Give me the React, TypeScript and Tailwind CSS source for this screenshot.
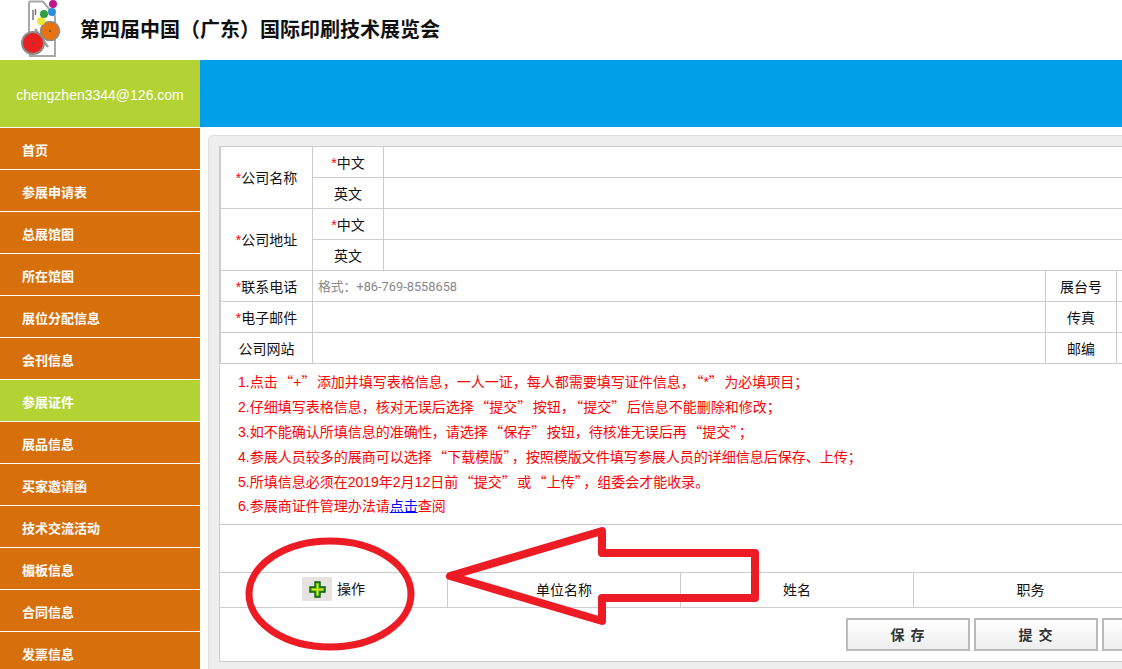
const MENU = [
  "首页",
  "参展申请表",
  "总展馆图",
  "所在馆图",
  "展位分配信息",
  "会刊信息",
  "参展证件",
  "展品信息",
  "买家邀请函",
  "技术交流活动",
  "楣板信息",
  "合同信息",
  "发票信息",
];

const NOTES = [
  "1.点击“+”添加并填写表格信息，一人一证，每人都需要填写证件信息，“*”为必填项目；",
  "2.仔细填写表格信息，核对无误后选择“提交”按钮，“提交”后信息不能删除和修改；",
  "3.如不能确认所填信息的准确性，请选择“保存”按钮，待核准无误后再“提交”；",
  "4.参展人员较多的展商可以选择“下载模版”，按照模版文件填写参展人员的详细信息后保存、上传；",
  "5.所填信息必须在2019年2月12日前“提交”或“上传”，组委会才能收录。",
];

const FONT = "font-['Liberation_Sans','Noto_Sans_CJK_SC',sans-serif]";

function Logo() {
  return (
    <svg width="80" height="60" viewBox="0 0 80 60" className="shrink-0">
      <path d="M29 1.5 H43 L55 16 V56 H30 V52 M29 1.5 V33" fill="none" stroke="#a8a8a8" strokeWidth="2" />
      <path d="M33 10 V20 M35.5 9 V15" stroke="#777" strokeWidth="1.5" />
      <line x1="35" y1="29" x2="48" y2="47" stroke="#a0a0a0" strokeWidth="2.5" />
      <circle cx="33" cy="43" r="11" fill="#e8201f" stroke="#8c8c8c" strokeWidth="2" />
      <circle cx="50" cy="31" r="9.5" fill="#e8720f" stroke="#8c8c8c" strokeWidth="1.6" />
      <circle cx="33" cy="43" r="1" fill="#555" />
      <circle cx="50" cy="31" r="1" fill="#555" />
      <circle cx="41" cy="21" r="4" fill="#f1e632" />
      <circle cx="44" cy="14" r="4" fill="#2f9e3f" />
      <circle cx="52" cy="12" r="4" fill="#2d8fd5" />
      <circle cx="53" cy="4" r="4" fill="#b9198c" />
    </svg>
  );
}

function Star() {
  return <span className="text-[#f00]">*</span>;
}

function Label({ required, children }: { required?: boolean; children: string }) {
  return (
    <td className="border border-[#ccc] pt-[3px] text-center text-[14px] text-[#111]">
      {required && <Star />}
      {children}
    </td>
  );
}

function Blank() {
  return <td className="border border-[#ccc]" />;
}

// curly quotes sit wider in the reference than in the fallback font
function Note({ text }: { text: string }) {
  return (
    <p className="h-[25px]">
      {text.split(/([“”])/).map((part, i) => {
        if (part === "“") {
          return (
            <span key={i} className="pl-[1.5px] font-['Noto_Sans_CJK_SC',sans-serif]">
              {part}
            </span>
          );
        }
        if (part === "”") {
          return (
            <span key={i} className="pr-[1.5px] font-['Noto_Sans_CJK_SC',sans-serif]">
              {part}
            </span>
          );
        }
        return part;
      })}
    </p>
  );
}

export default function App() {
  return (
    <div className={`${FONT} h-[669px] w-[1122px] overflow-hidden bg-white`}>
      <header className="flex h-[60px] items-center">
        <Logo />
        <h1 className="text-[20px] font-bold text-[#111]">第四届中国（广东）国际印刷技术展览会</h1>
      </header>

      <div className="flex h-[67px]">
        <div className="flex w-[200px] items-center justify-center bg-[#b3d334] pt-[3px] text-[14px] text-white">
          chengzhen3344@126.com
        </div>
        <div className="flex-1 bg-[#00a0e9]" />
      </div>

      <div className="relative flex">
        <nav className="w-[200px] shrink-0 pt-px">
          {MENU.map((item) => (
            <div
              key={item}
              className={`mb-px flex h-[41px] items-center pl-[22px] pt-[4px] text-[13px] font-bold text-white ${
                item === "参展证件" ? "bg-[#b3d334]" : "bg-[#d76f0a]"
              }`}
            >
              {item}
            </div>
          ))}
        </nav>

        <main className="min-w-0 flex-1 overflow-hidden pl-2 pt-2">
          <div className="h-[540px] w-[1000px] rounded-tl-[5px] border border-[#ddd] bg-[#eee] pl-[10px] pt-[10px]">
            <div className="h-[516px] border border-[#ccc] border-t-0 bg-white">
              <table className="w-full table-fixed border-collapse">
                <colgroup>
                  <col className="w-[92px]" />
                  <col className="w-[71px]" />
                  <col />
                  <col className="w-[71px]" />
                  <col className="w-[89px]" />
                </colgroup>
                <tbody>
                  <tr className="h-[31px]">
                    <td rowSpan={2} className="border border-[#ccc] pt-px text-center text-[14px] text-[#111]">
                      <Star />公司名称
                    </td>
                    <Label required>中文</Label>
                    <td colSpan={3} className="border border-[#ccc]" />
                  </tr>
                  <tr className="h-[31px]">
                    <Label>英文</Label>
                    <td colSpan={3} className="border border-[#ccc]" />
                  </tr>
                  <tr className="h-[31px]">
                    <td rowSpan={2} className="border border-[#ccc] pt-px text-center text-[14px] text-[#111]">
                      <Star />公司地址
                    </td>
                    <Label required>中文</Label>
                    <td colSpan={3} className="border border-[#ccc]" />
                  </tr>
                  <tr className="h-[31px]">
                    <Label>英文</Label>
                    <td colSpan={3} className="border border-[#ccc]" />
                  </tr>
                  <tr className="h-[31px]">
                    <Label required>联系电话</Label>
                    <td colSpan={2} className="border border-[#ccc] pl-[5px] pt-px font-['Roboto','Noto_Sans_CJK_SC',sans-serif] text-[12.8px] text-[#888]">
                      格式：+86-769-8558658
                    </td>
                    <Label>展台号</Label>
                    <Blank />
                  </tr>
                  <tr className="h-[31px]">
                    <Label required>电子邮件</Label>
                    <td colSpan={2} className="border border-[#ccc]" />
                    <Label>传真</Label>
                    <Blank />
                  </tr>
                  <tr className="h-[31px]">
                    <Label>公司网站</Label>
                    <td colSpan={2} className="border border-[#ccc]" />
                    <Label>邮编</Label>
                    <Blank />
                  </tr>
                </tbody>
              </table>

              <div className="h-[161px] border-b border-[#ccc] pl-[18px] pt-[5px] text-[14px] leading-[25px] text-[#f00]">
                {NOTES.map((note) => (
                  <Note key={note} text={note} />
                ))}
                <p>
                  6.参展商证件管理办法请<a className="text-[#00f] underline">点击</a>查阅
                </p>
              </div>

              <div className="mt-[47px] flex h-[36px] border-y border-[#ccc] text-[14px] text-[#111]">
                <div className="flex w-[228px] items-center justify-center gap-[5px] border-r border-[#ccc] pb-[2px]">
                  <span className="flex h-[24px] w-[30px] items-center justify-center bg-[#e6e2df]">
                    <svg width="17" height="17" viewBox="0 0 17 17">
                      <path
                        d="M6 1 H11 V6 H16 V11 H11 V16 H6 V11 H1 V6 H6 Z"
                        fill="#5fc400"
                        stroke="#0b5a12"
                        strokeWidth="1.4"
                      />
                      <path d="M8.5 3 V14 M3 8.5 H14" stroke="#e6e330" strokeWidth="1.4" />
                    </svg>
                  </span>
                  操作
                </div>
                <div className="flex w-[233px] items-center justify-center border-r border-[#ccc]">单位名称</div>
                <div className="flex w-[233px] items-center justify-center border-r border-[#ccc]">姓名</div>
                <div className="flex w-[233px] items-center justify-center">职务</div>
              </div>

              <div className="flex gap-1 pl-[626px] pt-[10px]">
                {["保 存", "提 交", ""].map((label, i) => (
                  <button
                    key={i}
                    className="h-[33px] w-[124px] shrink-0 border-2 border-[#bbb] bg-gradient-to-b from-white to-[#eee] pt-px text-[14px] font-bold tracking-[1px] text-[#333]"
                  >
                    {label}
                  </button>
                ))}
              </div>
            </div>
          </div>
        </main>

        <svg className="pointer-events-none absolute left-[240px] top-[395px]" width="530" height="135" viewBox="240 522 530 135">
          <ellipse cx="330" cy="594" rx="81" ry="53" fill="none" stroke="#ed1c24" strokeWidth="7" />
          <path
            d="M450 576 L602 531 V553 H755 V598 H602 V621 Z"
            fill="none"
            stroke="#ed1c24"
            strokeWidth="8"
            strokeLinejoin="round"
          />
        </svg>
      </div>
    </div>
  );
}
